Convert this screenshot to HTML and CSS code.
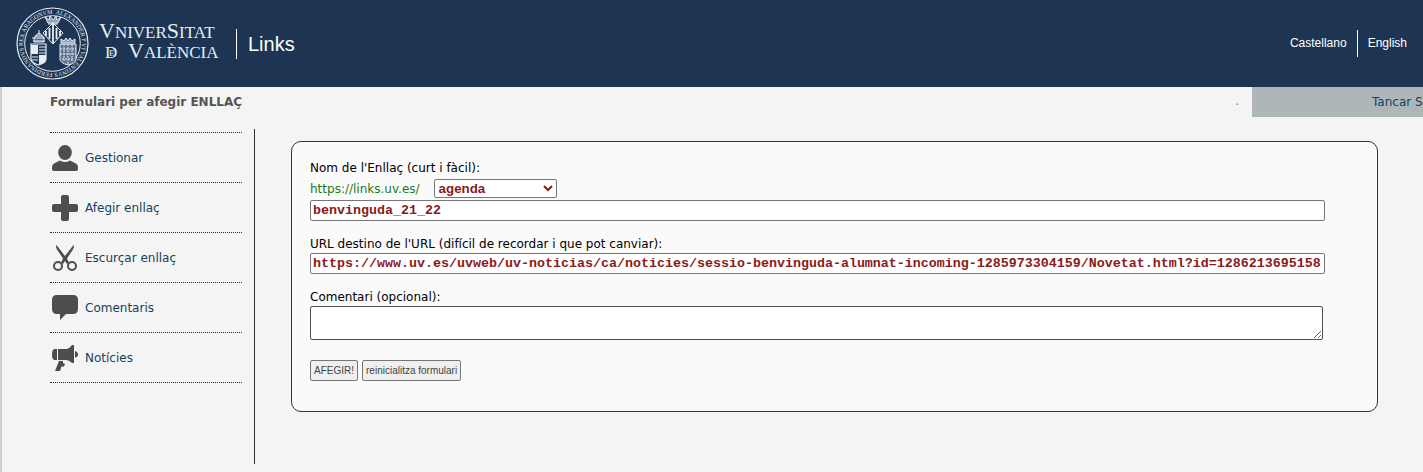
FILE: index.html
```html
<!DOCTYPE html>
<html lang="ca">
<head>
<meta charset="utf-8">
<title>Links - Universitat de València</title>
<link rel="stylesheet" href="styles.css">
</head>
<body>
<header class="masthead">
  <a class="brand" href="#" aria-label="Universitat de València">
    <svg class="brand-logo" width="208" height="76" viewBox="0 0 208 76">
      <defs>
        <path id="ring" d="M37.5 8a29.500 29.500 0 1 1-.01 0"/>
      </defs>
      <g fill="none" stroke="#e6edf3">
        <circle cx="37.500" cy="37.500" r="35.500" stroke-width="1.200"/>
        <circle cx="37.500" cy="37.500" r="27.800" stroke-width="1"/>
      </g>
      <text class="ring-text"><textPath href="#ring" startOffset="3">ALEXANDER P VI VALENTINVS FERDINANDVS REX ARAGONVM</textPath></text>
      <g stroke="#e6edf3" fill="none">
        <path d="M38 17l10 10-10 11-10-11z" fill="#1d3552" stroke-width="1"/>
        <path d="M34.500 22v11M38 18v19M41.500 22v11M45 25v5M31 25v5" stroke-width="1.800"/>
        <path d="M30 11l3 6h10l3-6-4 3-1-4-3 4-3-4-1 4zM33 18h10" stroke-width="1" fill="#8fa2b5"/>
        <path d="M16 38h15v15q0 4-7.500 6-7.500-2-7.500-6z" fill="#1d3552" stroke-width="1.200"/>
        <path d="M16 39h7v9h-7zM24 49h7v4q0 3-7 6z" fill="#e6edf3" stroke="none"/>
        <path d="M24 41h7M24 44h7M24 47h7M17 51h6M17 54h6" stroke-width="1.200"/>
        <path d="M19 36q-1-6 5-9 6 3 5 9zM17 32h13M18 35h12M24 24v5M20 30h8" stroke-width="1" fill="#52677e"/>
        <path d="M45 38h16v15q0 4-8 6-8-2-8-6z" fill="#60758b" stroke-width="1"/>
        <path d="M45 43h16M45 48h16M47 53h12M49 38v18M53 38v20M57 38v18" stroke-width="1" stroke-dasharray="2 1"/>
        <path d="M46 37v-4l3 2 2-3 2 3 2-3 2 3 3-2v4z" fill="#8fa2b5" stroke-width="1"/>
      </g>
      <g class="word">
        <text x="84" y="32"><tspan class="cap">V</tspan><tspan>NIVER</tspan><tspan class="cap">S</tspan><tspan>ITAT</tspan></text>
        <text x="90" y="52">D</text>
        <text class="inner" x="94" y="50">E</text>
        <text x="113" y="52"><tspan class="cap">V</tspan><tspan>ALÈNCIA</tspan></text>
      </g>
    </svg>
  </a>
  <a class="site-name" href="#">Links</a>
  <nav class="languages" aria-label="Idioma">
    <a href="#">Castellano</a>
    <a href="#">English</a>
  </nav>
</header>
<div class="page">
  <div class="topbar">
    <h1 class="title">Formulari per afegir ENLLAÇ</h1>
    <span class="mark">.</span>
    <a class="logout" href="#">Tancar Sessió</a>
  </div>
  <div class="columns">
    <nav class="sidebar" aria-label="Menú">
      <ul class="menu">
        <li><a href="#"><svg class="icon" viewBox="0 0 26 26"><ellipse cx="13" cy="7.500" rx="6.800" ry="7.500"/><path d="M8 15.500q5 3 10 0l6 3q2 1 2 4v1.500q0 2-2 2H2q-2 0-2-2v-1.500q0-3 2-4z"/></svg>Gestionar</a></li>
        <li><a href="#"><svg class="icon" viewBox="0 0 26 26"><path d="M11 0h4q2 0 2 2v7h7q2 0 2 2v4q0 2-2 2h-7v7q0 2-2 2h-4q-2 0-2-2v-7H2q-2 0-2-2v-4q0-2 2-2h7V2q0-2 2-2z"/></svg>Afegir enllaç</a></li>
        <li><a href="#"><svg class="icon" viewBox="0 0 26 26"><path d="M4.500 0q-1 2 .5 4.500l6 9-2 4 2 1.500 2-3 2 3 2-1.500-2-4 6-9q1.500-2.500.5-4.500L13 11z"/><g class="rings"><circle cx="6" cy="21" r="4"/><circle cx="20" cy="21" r="4"/></g></svg>Escurçar enllaç</a></li>
        <li><a href="#"><svg class="icon" viewBox="0 0 26 26"><path d="M5 0h16q5 0 5 5v9q0 5-5 5h-7l-6 6v-6H5q-5 0-5-5V5q0-5 5-5z"/></svg>Comentaris</a></li>
        <li><a href="#"><svg class="icon" viewBox="0 0 26 26"><path d="M2 4h3v11H2q-2-1-2-5.500t2-5.500zM6 4h8q3 0 6-4h2v18h-2q-3-3-6-3H6zM23 6q3 1 3 3.500t-3 3zM7 16h4v2l2 1-1 2.500H9.500l-1.500 4.500H3z"/></svg>Notícies</a></li>
      </ul>
    </nav>
    <main class="content">
      <form class="card">
        <div class="field">
          <label for="name">Nom de l'Enllaç (curt i fàcil):</label>
          <div class="prefix">
            <span class="host">https://links.uv.es/</span>
            <select class="group" aria-label="Grup"><option>agenda</option></select>
          </div>
          <input class="text" id="name" type="text" value="benvinguda_21_22">
        </div>
        <div class="field">
          <label for="url">URL destino de l'URL (difícil de recordar i que pot canviar):</label>
          <input class="text" id="url" type="text" value="https://www.uv.es/uvweb/uv-noticias/ca/noticies/sessio-benvinguda-alumnat-incoming-1285973304159/Novetat.html?id=1286213695158">
        </div>
        <div class="field">
          <label for="comment">Comentari (opcional):</label>
          <textarea class="comment" id="comment" rows="2"></textarea>
        </div>
        <div class="actions">
          <button type="submit">AFEGIR!</button>
          <button type="reset">reinicialitza formulari</button>
        </div>
      </form>
    </main>
  </div>
</div>
</body>
</html>
```
FILE: styles.css
```css
* { box-sizing: border-box; }

body {
  margin: 0;
  background: #f4f4f4;
  color: #000;
  font: 12px/16px "DejaVu Sans", Verdana, sans-serif;
}

a { color: #14425e; text-decoration: none; }

.masthead {
  display: flex;
  align-items: center;
  height: 87px;
  padding: 0 16px 0 15px;
  background: #1d3552;
  font-family: "Liberation Sans", Arial, sans-serif;
}
.masthead a { color: #fff; }
.brand { display: flex; }
.brand-logo { fill: #e6edf3; font-family: "Liberation Serif", serif; }
.ring-text { font-size: 6px; }
.word { font-size: 17px; }
.word .cap { font-size: 22px; }
.word .inner { font-size: 9px; }
.site-name {
  margin-left: 13px;
  padding-left: 11px;
  border-left: 1px solid #fff;
  font-size: 20px;
  line-height: 30px;
}
.languages { display: flex; margin-left: auto; font-size: 12px; line-height: 27px; }
.languages a + a { margin-left: 10px; padding-left: 10px; border-left: 1px solid #fff; }

.page {
  min-height: calc(100vh - 87px);
  border-left: 2px solid #d0d0cc;
}
.topbar { display: flex; height: 42px; padding-left: 48px; }
.title { margin: 6px 0 0; color: #555; font-size: 12px; line-height: 18px; }
.mark { margin: 6px 13px 0 auto; color: #777; }
.logout {
  flex: none;
  width: 171px;
  height: 30px;
  padding-left: 120px;
  overflow: hidden;
  background: #afb6b7;
  line-height: 30px;
  white-space: nowrap;
}

.columns { display: flex; padding: 0 45px 8px 48px; }
.sidebar {
  flex: none;
  width: 205px;
  min-height: 335px;
  padding: 3px 12px 0 0;
  border-right: 1px solid #333;
}
.menu { margin: 0; padding: 0; list-style: none; border-top: 1px dotted #14305a; }
.menu li { border-bottom: 1px dotted #14305a; }
.menu a { display: flex; align-items: center; gap: 7px; height: 49px; padding: 0 2px; }
.icon { width: 26px; height: 26px; fill: #4d4d4d; }
.rings { fill: none; stroke: #4d4d4d; stroke-width: 2px; }

.content { flex: 1; min-width: 0; padding: 12px 0 0 36px; }
.card {
  padding: 18px 52px 30px 18px;
  border: 1px solid #333;
  border-radius: 10px;
  background: #fafafa;
}
.field { margin-bottom: 15px; }
.field label { display: block; line-height: 17px; }
.prefix { display: flex; align-items: center; gap: 14px; padding: 2px 0; }
.host { color: #1a7a1a; }
.group {
  width: 123px;
  height: 19px;
  border: 1px solid #767676;
  border-radius: 2px;
  background: #fff;
  color: #8b1a1a;
  font-family: "Liberation Sans", Arial, sans-serif;
  font-weight: bold;
}
.text {
  display: block;
  width: 100%;
  height: 21px;
  padding: 1px 2px;
  border: 1px solid #767676;
  border-radius: 2px;
  background: #fff;
  color: #8b1a1a;
  font-family: "Liberation Mono", "Courier New", monospace;
  font-weight: bold;
}
.comment {
  display: block;
  width: calc(100% - 2px);
  height: 34px;
  border: 1px solid #4d4d4d;
  border-radius: 2px;
  background: #fff;
}
.actions { display: flex; gap: 4px; padding-top: 5px; }
.actions button {
  height: 21px;
  padding: 0 3px;
  border: 1px solid #767676;
  border-radius: 2px;
  background: #efefef;
  color: #444;
  font: 10px "Liberation Sans", Arial, sans-serif;
}
```
